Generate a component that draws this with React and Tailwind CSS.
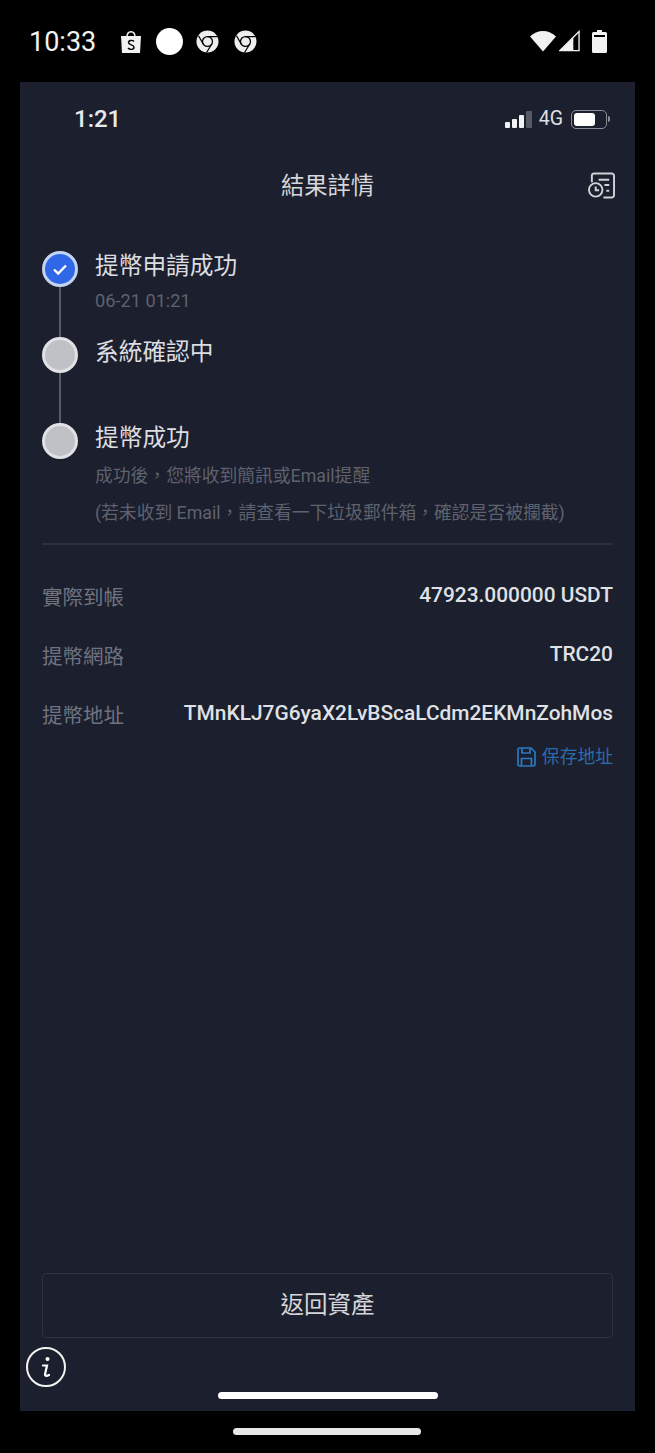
const sans = { fontFamily: '"Roboto","Noto Sans CJK TC",sans-serif' };

function Chrome() {
  return (
    <svg width="23" height="23" viewBox="0 0 24 24" fill="none">
      <circle cx="12" cy="12" r="11.5" fill="#eee" />
      <circle cx="12" cy="12" r="5.2" fill="#eee" stroke="#000" strokeWidth="1.3" />
      <path d="M12 6.8H22.5M7.500 14.600L2.600 6M16.500 14.600L11 23.500" stroke="#000" strokeWidth="1.3" />
    </svg>
  );
}

function AndroidBar() {
  return (
    <div className="h-[82px] shrink-0 flex items-center pl-[29px] pr-[48px] text-[#f2f2f2]">
      <span className="text-[27px] leading-none w-[67px] relative top-[1px]">10:33</span>
      <div className="ml-[24px] flex items-center">
        <svg width="22" height="25" viewBox="0 0 22 25" fill="none">
          <path d="M1 7H21L20 24H2Z" fill="#f2f2f2" />
          <path d="M7 8C7 1 15 1 15 8" stroke="#f2f2f2" strokeWidth="1.5" fill="none" />
          <path d="M14 12.5C12.500 10.800 8.500 11 8.500 13.600C8.500 16.400 14 15.400 14 18.200C14 20.800 9.800 21 8 19" stroke="#000" strokeWidth="1.4" fill="none" />
        </svg>
        <div className="ml-[14px] w-[27px] h-[27px] rounded-full bg-white" />
        <div className="ml-[13px]"><Chrome /></div>
        <div className="ml-[15px]"><Chrome /></div>
      </div>
      <div className="ml-auto flex items-center">
        <svg width="26" height="22" viewBox="0 0 26 22"><path d="M0 6.500C7 -1 19 -1 26 6.500L13 21.500Z" fill="#f2f2f2" /></svg>
        <svg className="ml-[3px]" width="21" height="22" viewBox="0 0 22 22"><path d="M21 1V21H1Z" fill="none" stroke="#f2f2f2" strokeWidth="1.400" /><path d="M15 7.500V21H1Z" fill="#f2f2f2" /></svg>
        <svg className="ml-[12px]" width="15" height="23" viewBox="0 0 15 23"><path d="M5 0H10V2H13.500A1.500 1.500 0 0 1 15 3.500V21.500A1.500 1.500 0 0 1 13.500 23H1.500A1.500 1.500 0 0 1 0 21.500V3.500A1.500 1.500 0 0 1 1.500 2H5Z" fill="#f2f2f2" /><rect x="2" y="5" width="11" height="2" fill="#000" /></svg>
      </div>
    </div>
  );
}

function IosBar() {
  return (
    <div className="h-[74px] flex items-center pl-[54px] pr-[25px] text-[#e8e9ec]">
      <span className="text-[24px] font-medium leading-none">1:21</span>
      <div className="ml-auto flex items-center">
        <div className="flex items-end gap-[2px] h-[17px]">
          <div className="w-[5px] h-[6px] bg-[#f2f2f2] rounded-[1px]" />
          <div className="w-[5px] h-[9px] bg-[#f2f2f2] rounded-[1px]" />
          <div className="w-[5px] h-[13px] bg-[#f2f2f2] rounded-[1px]" />
          <div className="w-[6px] h-[17px] bg-[#555a66] rounded-[1px]" />
        </div>
        <span className="ml-[7px] text-[19.5px] leading-none text-[#dfe0e4]">4G</span>
        <div className="ml-[8px] w-[36px] h-[19px] rounded-[5px] border border-[#8b8e97] p-[2px]">
          <div className="w-[21px] h-full bg-white rounded-[3px]" />
        </div>
        <div className="ml-[1px] w-[2px] h-[6px] bg-[#8b8e97] rounded-r-[2px]" />
      </div>
    </div>
  );
}

function Step({ title, state, last, children }) {
  return (
    <div className={"flex gap-[17px] " + (last ? "" : "h-[86px]")}>
      <div className="flex flex-col items-center w-[36px] shrink-0">
        {state === "done" ? (
          <div className="w-[36px] h-[36px] rounded-full border-[3px] border-[#c3d4f3] bg-[#2f67e6] flex items-center justify-center shrink-0">
            <svg width="16" height="13" viewBox="0 0 16 13" fill="none"><path d="M2 6.500L6.200 10.500L14 2.500" stroke="#fff" strokeWidth="2.400" /></svg>
          </div>
        ) : (
          <div className="w-[36px] h-[36px] rounded-full border-[3px] border-[#e0e1e5] bg-[#c0c1c6] shrink-0" />
        )}
        {!last && <div className="w-[2px] flex-1 bg-[#565a66]" />}
      </div>
      <div className="-mt-[3px]">
        <div className="text-[23.7px] leading-[36px] text-[#dcdde1]">{title}</div>
        {children}
      </div>
    </div>
  );
}

function InfoRow({ label, value, className }) {
  return (
    <div className={"flex justify-between items-center h-[28px] " + className}>
      <span className="text-[20.5px] leading-[28px] text-[#6f7380] relative top-[3px]">{label}</span>
      <span className="text-[20.9px] font-medium leading-[28px] text-[#dfe1e6]">{value}</span>
    </div>
  );
}

export default function App() {
  return (
    <div className="w-[655px] h-[1453px] bg-black flex flex-col overflow-hidden" style={sans}>
      <AndroidBar />
      <div className="relative mx-[20px] h-[1329px] bg-[#1c1f2d] flex flex-col">
        <IosBar />
        <div className="relative h-[62px] flex items-center justify-center">
          <span className="text-[23.3px] leading-none text-[#d5d6da]">結果詳情</span>
          <svg className="absolute right-[20px] top-[16px]" width="27" height="27" viewBox="0 0 28 27" fill="none" stroke="#d0d2d6" strokeWidth="2">
            <path d="M4 10V3.500A2.500 2.500 0 0 1 6.500 1H24.500A2.500 2.500 0 0 1 27 3.500V23.500A2.500 2.500 0 0 1 24.500 26H16" />
            <path d="M11 7.500H22M17 13H22M19 19H22" />
            <circle cx="8" cy="18" r="7" />
            <path d="M8 14.500V18.500H11.500" />
          </svg>
        </div>
        <div className="pl-[22px] pr-[22px] pt-[33px]">
          <Step title="提幣申請成功" state="done">
            <div className="mt-[6px] text-[18.2px] leading-[22px] text-[#5e626e]">06-21 01:21</div>
          </Step>
          <Step title="系統確認中" />
          <Step title="提幣成功" last>
            <div className="mt-[2px] text-[17.8px] leading-[36.500px] text-[#5e626e]">
              <div>成功後，您將收到簡訊或Email提醒</div>
              <div className="whitespace-nowrap">(若未收到 Email，請查看一下垃圾郵件箱，確認是否被攔截)</div>
            </div>
          </Step>
          <div className="mt-[12px] h-[2px] bg-[#2c303c]" />
          <InfoRow className="mt-[36px]" label="實際到帳" value="47923.000000 USDT" />
          <InfoRow className="mt-[31px]" label="提幣網路" value="TRC20" />
          <InfoRow className="mt-[31px]" label="提幣地址" value="TMnKLJ7G6yaX2LvBScaLCdm2EKMnZohMos" />
          <div className="mt-[18px] flex justify-end items-center text-[17.800px] leading-[24px] text-[#2b6cab]">
            <svg width="19" height="20" viewBox="0 0 19 20" fill="none" stroke="#2b7ac2" strokeWidth="1.700">
              <path d="M1 2.500A1.500 1.500 0 0 1 2.500 1H14L18 5V17.500A1.500 1.500 0 0 1 16.500 19H2.500A1.500 1.500 0 0 1 1 17.500Z" />
              <path d="M5 1V6H13V1M4.500 19V11.500H14.500V19" />
            </svg>
            <span className="ml-[6px]">保存地址</span>
          </div>
        </div>
        <div className="mt-auto mx-[22px] mb-[73px] h-[65px] rounded-[4px] border border-[#2b3342] flex items-center justify-center text-[23.500px] leading-none text-[#d5d6da]">
          返回資產
        </div>
        <div className="absolute left-[6px] bottom-[24px] w-[40px] h-[40px] rounded-full border-2 border-[#f2f2f2] flex items-center justify-center">
          <svg width="12" height="24" viewBox="0 0 12 24" fill="none">
            <circle cx="7.500" cy="4" r="2" fill="#fff" />
            <path d="M3 10.500H7L5 19.500C4.800 21 6.500 21.500 9 20" stroke="#fff" strokeWidth="2.200" strokeLinecap="round" />
          </svg>
        </div>
        <div className="absolute left-[198px] bottom-[12px] w-[220px] h-[7px] rounded-full bg-white" />
      </div>
      <div className="flex-1 flex items-center justify-center pb-[1px]">
        <div className="w-[188px] h-[7px] rounded-full bg-[#e8e8e8] relative -left-[1px]" />
      </div>
    </div>
  );
}
